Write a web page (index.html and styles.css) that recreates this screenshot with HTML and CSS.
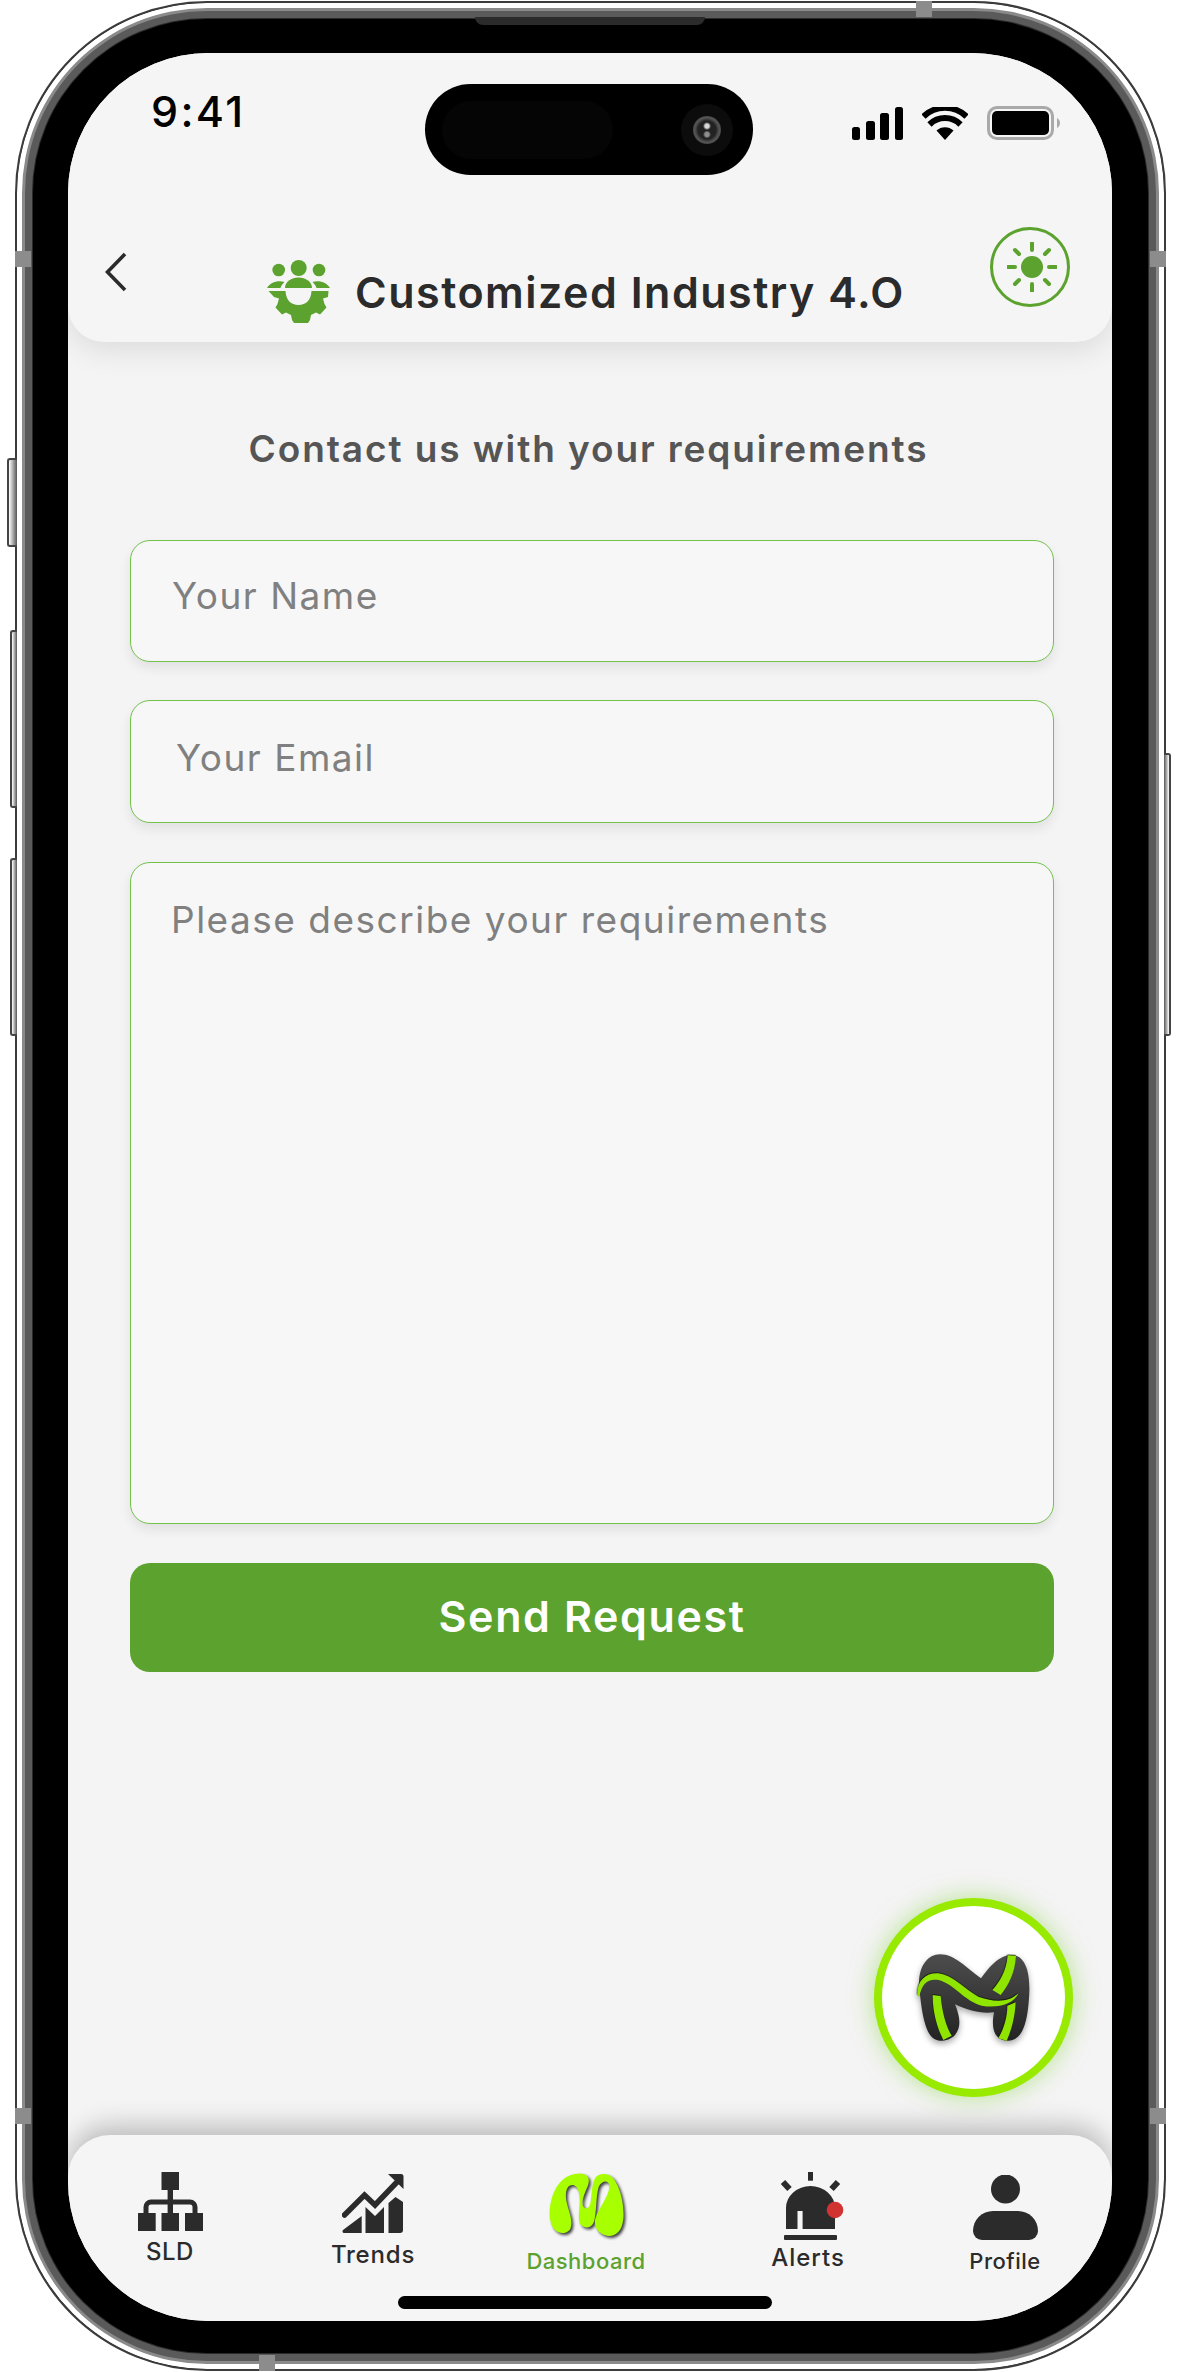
FILE: index.html
```html
<!DOCTYPE html>
<html lang="en">
<head>
<meta charset="utf-8">
<title>Customized Industry 4.0</title>
<link rel="stylesheet" href="styles.css">
</head>
<body>
<div class="phone">
  <span class="hw hw-mute"></span>
  <span class="hw hw-volup"></span>
  <span class="hw hw-voldown"></span>
  <span class="hw hw-power"></span>
  <span class="band band-top"></span>
  <span class="band band-left1"></span>
  <span class="band band-right1"></span>
  <span class="band band-left2"></span>
  <span class="band band-right2"></span>
  <span class="band band-bottom"></span>
  <span class="speaker"></span>
  <div class="screen">
    <header class="header">
      <div class="status">
        <div class="time">9:41</div>
        <div class="island">
          <span class="island-blob"></span>
          <span class="camera"><span class="lens"></span></span>
        </div>
        <div class="status-icons">
          <svg class="signal" viewBox="0 0 52 33"><rect x="1" y="20" width="8" height="13" rx="2.5"/><rect x="15" y="14" width="9" height="19" rx="2.5"/><rect x="29" y="6" width="9" height="27" rx="2.5"/><rect x="44" y="0" width="8" height="33" rx="2.5"/></svg>
          <svg class="wifi" viewBox="0 0 46 33"><path d="M23 33 14.5 23.5a12.5 12.5 0 0 1 17 0Z"/><path class="wifi-arc" d="M7.5 17.5a22 22 0 0 1 31 0"/><path class="wifi-arc" d="M1.5 9.5a31 31 0 0 1 43 0"/></svg>
          <svg class="battery" viewBox="0 0 74 34"><rect class="batt-shell" x="1.5" y="1.5" width="64" height="31" rx="8.5"/><rect x="5" y="5" width="57" height="24" rx="5"/><path class="batt-tip" d="M70 12c2 1 3 3 3 5s-1 4-3 5Z"/></svg>
        </div>
      </div>
      <div class="titlebar">
        <svg class="back" viewBox="0 0 22 40"><path d="M20 2 2.500 20 20 38"/></svg>
        <svg class="title-icon" viewBox="27 19 64 64">
          <circle cx="58.700" cy="28" r="8"/><circle cx="38.700" cy="30" r="6.300"/><circle cx="79" cy="30" r="6.300"/>
          <path d="M45 48a13.500 10.500 0 0 1 27 0Z"/>
          <path d="M27 48c3-5 10-8 17.500-6-2 2-3.500 4-4 6Z"/>
          <path d="M90 48c-3-5-10-8-17.500-6 2 2 3.500 4 4 6Z"/>
          <path d="M28.500 51H45.500C46 60 51 65 58.500 65S71 60 71.500 51H88.500L88 57l-5 1.500 1.500 5.500 2 3.500-6.500 7-4-2-5 2.500-1 5-2 3H54l-2-3-1-5-5-2.500-4 2-6.500-7 2-3.500 1.500-5.500-5-1.500Z"/>
        </svg>
        <h1 class="title">Customized Industry 4.O</h1>
        <div class="sun-btn">
          <svg class="sun" viewBox="0 0 50 50">
            <circle cx="25" cy="25" r="11"/>
            <path class="rays" d="M25 1v7M25 42v7M1 25h7M42 25h7M8 8l4 4M38 38l4 4M42 8l-4 4M12 38l-4 4"/>
          </svg>
        </div>
      </div>
    </header>

    <main class="main">
      <h2 class="heading">Contact us with your requirements</h2>
      <form class="form">
        <div class="field field-name">Your Name</div>
        <div class="field field-email">Your Email</div>
        <div class="field field-area">Please describe your requirements</div>
        <button class="send" type="button">Send Request</button>
      </form>
      <div class="fab">
        <svg class="fab-logo" viewBox="0 0 390 315">
          <defs>
            <linearGradient id="mdark" x1="0" y1="0" x2="0" y2="1">
              <stop offset="0" stop-color="#4d4d4d"/><stop offset="1" stop-color="#232323"/>
            </linearGradient>
          </defs>
          <path fill="url(#mdark)" d="M28 130C22 70 50 28 90 28C135 28 170 70 213 100C235 70 265 30 305 30C345 30 360 80 358 140C355 210 345 287 295 287C262 287 240 265 252 202C215 208 170 195 135 178C150 215 155 245 135 270C120 287 90 290 80 285C45 275 35 200 28 130Z"/>
          <g class="m-stripes">
            <path d="M22 150C20 105 50 82 85 85C130 90 160 130 205 155C245 170 295 175 325 145C310 180 260 190 215 182C165 170 130 115 85 105C55 100 35 115 28 155Z"/>
            <path d="M293 31 318 32C315 85 295 120 272 150L247 135C270 110 290 75 293 31Z"/>
            <path d="M68 150 92 153C96 200 108 245 125 272L100 285C80 245 68 200 68 150Z"/>
            <path d="M292 182 317 172C315 215 305 255 290 287L265 280C282 250 292 215 292 182Z"/>
          </g>
        </svg>
      </div>
    </main>

    <nav class="tabbar">
      <div class="tab tab-sld">
        <svg class="ic" width="65" height="59" viewBox="0 0 65 59">
          <rect x="23.500" width="17.500" height="18"/><rect x="29.600" y="17" width="5.400" height="25"/>
          <path class="sld-line" d="M8 42V35a5 5 0 0 1 5-5H52a5 5 0 0 1 5 5V42"/>
          <rect y="41" width="17.700" height="18"/><rect x="23.500" y="41" width="17.500" height="18"/><rect x="47" y="41" width="18" height="18"/>
        </svg>
        <span class="label">SLD</span>
      </div>
      <div class="tab tab-trends">
        <svg class="ic" width="62" height="60" viewBox="0 0 62 60">
          <path class="tr-line" d="M2.500 42 22.500 22 33 32 56 8"/>
          <path d="M46 1h13a2.500 2.500 0 0 1 2.500 2.500V16Z"/>
          <path d="M2 60c-1.500 0-2-1.500-1-3L19.700 43V60Z"/>
          <path d="M23.500 34 33 43 42 34V60H23.500Z"/>
          <path d="M46.500 30l7-6 7.500 5V57a3 3 0 0 1-3 3H46.500Z"/>
        </svg>
        <span class="label">Trends</span>
      </div>
      <div class="tab tab-dash">
        <svg class="ic dash-logo" width="76" height="64" viewBox="146 98 228 192">
          <path d="M152 235C146 180 172 102 235 100C262 98 274 112 266 135C258 155 246 180 250 195C254 208 268 208 273 190C278 170 276 130 288 112C296 100 320 96 335 108C360 128 376 190 372 235C368 280 340 292 318 285C296 278 282 258 288 235C296 205 332 165 330 135C328 118 306 120 298 140C290 165 292 205 286 235C282 258 268 264 256 260C240 256 236 240 240 205C244 170 240 138 222 134C204 132 198 150 200 175C204 205 222 235 214 262C208 284 160 290 152 235Z"/>
        </svg>
        <span class="label">Dashboard</span>
      </div>
      <div class="tab tab-alerts">
        <svg class="ic al-icon" width="63" height="68" viewBox="0 0 63 68">
          <path fill-rule="evenodd" d="M5 57V36a24.500 22 0 0 1 49 0V57ZM16.500 39V57H21.600V39Z"/>
          <rect x="3" y="63" width="53" height="5" rx="1"/>
          <rect x="27" width="5" height="8.700"/>
          <path class="al-ray" d="M2 10 8.500 17M57 10 50.500 17"/>
          <circle class="al-dot" cx="54" cy="38" r="8.300"/>
        </svg>
        <span class="label">Alerts</span>
      </div>
      <div class="tab tab-profile">
        <svg class="ic" width="65" height="65" viewBox="0 0 65 65">
          <circle cx="32.500" cy="14" r="14.500"/>
          <path d="M20 36H45A20 20 0 0 1 65 56 9 9 0 0 1 56 65H9A9 9 0 0 1 0 56 20 20 0 0 1 20 36Z"/>
        </svg>
        <span class="label">Profile</span>
      </div>
      <span class="home-bar"></span>
    </nav>
  </div>
</div>
</body>
</html>
```
FILE: styles.css
```css
* { box-sizing: border-box; }
html, body { margin: 0; padding: 0; background: #fff; }
body { width: 1177px; height: 2372px; overflow: hidden; font-family: Inter, "Liberation Sans", sans-serif; }

.phone {
  position: relative;
  width: 1151px;
  height: 2370px;
  margin: 1px 0 0 15px;
  padding: 50px 52px 48px 51px;
  border: 2px solid #3c3c3c;
  border-radius: 192px;
  background: #000;
  box-shadow: inset 0 0 0 5px #fff, inset 0 0 0 8px #8a8a8a, inset 0 0 0 15px #5a5a5a, inset 0 0 0 16px #2a2a2a;
}

.hw { position: absolute; background: linear-gradient(90deg, #fff, #aaa 50%, #555); border: 2px solid #444; border-right: 0; border-radius: 3px 0 0 3px; }
.hw-mute { left: -10px; top: 455px; width: 10px; height: 89px; }
.hw-volup { left: -7px; top: 627px; width: 7px; height: 178px; }
.hw-voldown { left: -7px; top: 855px; width: 7px; height: 178px; }
.hw-power { right: -7px; top: 750px; width: 7px; height: 283px; border: 2px solid #444; border-left: 0; border-radius: 0 3px 3px 0; background: linear-gradient(270deg, #fff, #aaa 50%, #555); }

.band { position: absolute; background: #8c8c8c; }
.band-top { left: 899px; top: -2px; width: 16px; height: 16px; }
.band-left1 { left: -2px; top: 248px; width: 16px; height: 16px; }
.band-right1 { right: -2px; top: 248px; width: 16px; height: 16px; }
.band-left2 { left: -2px; top: 2105px; width: 16px; height: 16px; }
.band-right2 { right: -2px; top: 2105px; width: 16px; height: 16px; }
.band-bottom { left: 242px; bottom: -2px; width: 16px; height: 16px; }

.speaker { position: absolute; left: 458px; top: 14px; width: 230px; height: 8px; background: #2b2b2b; border-radius: 0 0 8px 8px; }

.screen {
  position: relative;
  display: flex;
  flex-direction: column;
  width: 1044px;
  height: 2268px;
  border-radius: 140px;
  overflow: hidden;
  background: #f4f4f4;
}

.header {
  position: relative;
  z-index: 2;
  flex: 0 0 289px;
  background: #f5f5f5;
  border-radius: 0 0 36px 36px;
  box-shadow: 0 8px 30px rgba(0, 0, 0, .1);
}

.status { display: grid; grid-template-columns: 357px 328px 1fr; height: 122px; padding-top: 31px; }
.time { padding: 1px 0 0 83px; font-size: 43px; line-height: 52px; font-weight: 500; color: #000; letter-spacing: 2.300px; }
.island { display: flex; align-items: center; justify-content: space-between; height: 91px; padding: 0 20px 0 17px; border-radius: 46px; background: #000; }
.island-blob { width: 171px; height: 58px; border-radius: 30px; background: #050505; }
.camera { display: flex; align-items: center; justify-content: center; width: 52px; height: 52px; border-radius: 50%; background: #0c0c0c; }
.lens {
  width: 28px;
  height: 28px;
  border-radius: 50%;
  background:
    radial-gradient(circle at 50% 36%, #d8d8d8 0 2px, transparent 4px),
    radial-gradient(circle at 50% 66%, #8f8f8f 0 2px, transparent 4px),
    radial-gradient(circle, #222 0 45%, #555 62%, #1c1c1c 100%);
}

.status-icons { display: flex; align-items: flex-start; padding: 23px 0 0 98px; }
.status-icons svg { display: block; flex: none; }
.signal { width: 52px; height: 33px; fill: #000; }
.wifi { width: 46px; height: 33px; margin-left: 19px; fill: #000; }
.wifi-arc { fill: none; stroke: #000; stroke-width: 6; }
.battery { width: 74px; height: 34px; margin: -1px 0 0 19px; fill: #000; }
.batt-shell { fill: none; stroke: #a9a9a9; stroke-width: 3; }
.batt-tip { fill: #a9a9a9; }

.titlebar { display: flex; align-items: flex-start; height: 80px; margin-top: 52px; padding: 0 42px 0 37px; }
.back { width: 22px; height: 40px; margin-top: 25px; flex: none; }
.back path { fill: none; stroke: #2b2b2b; stroke-width: 3.6; }
.title-icon { width: 64px; height: 64px; margin: 32px 0 0 140px; flex: none; fill: #5ba22e; }
.title { margin: 40px 0 0 24px; font-size: 43px; line-height: 50px; font-weight: 600; color: #2b2b2b; white-space: nowrap; letter-spacing: 1.500px; }
.sun-btn { display: flex; align-items: center; justify-content: center; width: 80px; height: 80px; margin-left: auto; border: 3px solid #5ba22e; border-radius: 50%; }
.sun { width: 50px; height: 50px; margin-left: 3px; fill: #5ba22e; }
.rays { fill: none; stroke: #5ba22e; stroke-width: 4; stroke-linecap: round; }

.main { position: relative; flex: 1; padding: 85px 58px 0 62px; }
.heading { margin: 0 0 69px; padding-right: 7px; text-align: center; font-size: 37px; line-height: 44px; font-weight: 600; color: #555; white-space: nowrap; letter-spacing: 1.900px; }
.form { display: flex; flex-direction: column; gap: 38px; }
.field {
  border: 1px solid #72c24b;
  border-radius: 20px;
  background: #f7f7f7;
  box-shadow: 0 6px 12px rgba(0, 0, 0, .08);
  color: #808080;
  font-size: 37px;
  line-height: 44px;
  letter-spacing: 1.500px;
}
.field-name { height: 122px; padding: 33px 0 0 41px; }
.field-email { height: 123px; margin-bottom: 1px; padding: 35px 0 0 45px; }
.field-area { height: 662px; margin-bottom: 1px; padding: 35px 0 0 40px; }
.send { height: 109px; padding: 0 0 4px; border: 0; border-radius: 20px; background: #5ba22e; color: #fff; font: 600 43px/50px Inter, sans-serif; letter-spacing: 1.600px; }

.fab {
  position: absolute;
  right: 39px;
  bottom: 38px;
  display: flex;
  align-items: center;
  justify-content: center;
  width: 199px;
  height: 199px;
  border: 8px solid #97ea00;
  border-radius: 50%;
  background: #fff;
  box-shadow: 0 0 24px rgba(120, 210, 40, .5);
}
.fab-logo { width: 130px; height: 105px; margin-left: 3px; filter: drop-shadow(0 3px 3px rgba(0, 0, 0, .35)); }
.m-stripes { fill: #8fe400; filter: drop-shadow(-1px -2px 1.500px rgba(0, 0, 0, .8)); }

.tabbar {
  position: relative;
  z-index: 2;
  flex: 0 0 186px;
  display: grid;
  grid-template-columns: 204px 202px 224px 220px 174px;
  background: #f5f5f5;
  border-radius: 42px 42px 0 0;
  box-shadow: 0 -10px 24px rgba(0, 0, 0, .22);
}
.tab { display: flex; flex-direction: column; align-items: center; color: #2b2b2b; }
.ic { display: block; flex: none; fill: #2b2b2b; }
.label { font-size: 24px; line-height: 24px; font-weight: 500; white-space: nowrap; }
.tab-sld { padding-top: 37px; }
.tab-sld .label { margin-top: 9px; letter-spacing: .5px; }
.tab-trends { padding-top: 38px; }
.tab-trends .label { margin-top: 10px; letter-spacing: .8px; }
.tab-dash { padding-top: 38px; }
.tab-dash .label { margin-top: 12px; font-size: 22px; color: #5ba22e; letter-spacing: .5px; }
.tab-alerts { padding-top: 37px; }
.tab-alerts .label { margin-top: 6px; letter-spacing: 1px; }
.al-icon { margin-left: 8px; }
.tab-profile { padding-top: 40px; }
.tab-profile .label { margin-top: 9px; font-size: 22px; letter-spacing: .5px; }

.sld-line { fill: none; stroke: #2b2b2b; stroke-width: 5; }
.tr-line { fill: none; stroke: #2b2b2b; stroke-width: 5.500; stroke-linecap: round; }
.al-ray { fill: none; stroke: #2b2b2b; stroke-width: 6; }
.al-dot { fill: #d13232; }
.dash-logo { fill: #a8ff00; filter: drop-shadow(2px 2px 1.500px rgba(0, 0, 0, .75)); }

.home-bar { position: absolute; left: 330px; top: 161px; width: 374px; height: 13px; border-radius: 7px; background: #000; }
```
